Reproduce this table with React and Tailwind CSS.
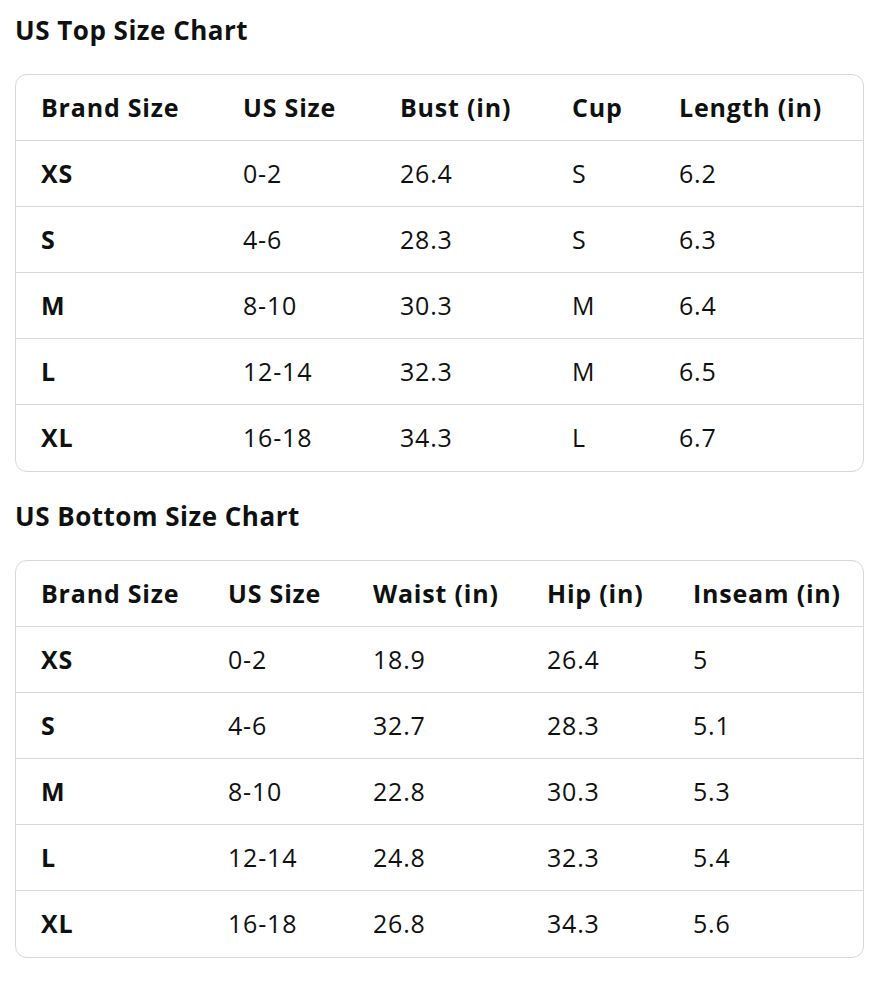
const TOP = {
  title: "US Top Size Chart",
  cols: "grid-cols-[202px_157px_172px_107px_1fr]",
  head: ["Brand Size", "US Size", "Bust (in)", "Cup", "Length (in)"],
  rows: [
    ["XS", "0-2", "26.4", "S", "6.2"],
    ["S", "4-6", "28.3", "S", "6.3"],
    ["M", "8-10", "30.3", "M", "6.4"],
    ["L", "12-14", "32.3", "M", "6.5"],
    ["XL", "16-18", "34.3", "L", "6.7"],
  ],
};

const BOTTOM = {
  title: "US Bottom Size Chart",
  cols: "grid-cols-[187px_145px_174px_146px_1fr]",
  head: ["Brand Size", "US Size", "Waist (in)", "Hip (in)", "Inseam (in)"],
  rows: [
    ["XS", "0-2", "18.9", "26.4", "5"],
    ["S", "4-6", "32.7", "28.3", "5.1"],
    ["M", "8-10", "22.8", "30.3", "5.3"],
    ["L", "12-14", "24.8", "32.3", "5.4"],
    ["XL", "16-18", "26.8", "34.3", "5.6"],
  ],
};

function SizeTable({ data }) {
  return (
    <section>
      <h2 className="text-[26px] font-bold leading-[32px] tracking-[0.5px] text-[#0f1111] pt-[14px] pb-[28px]">
        {data.title}
      </h2>
      <div className="border-[1.5px] border-[#d5d9d9] rounded-[12px] overflow-hidden">
        <div className={`grid ${data.cols} h-[66px] items-center border-b-[1.5px] border-[#d5d9d9] font-bold`}>
          {data.head.map((h) => (
            <div key={h} className="pl-[25px] whitespace-nowrap">{h}</div>
          ))}
        </div>
        {data.rows.map((row, i) => (
          <div
            key={row[0]}
            className={`grid ${data.cols} h-[66px] items-center ${
              i < data.rows.length - 1 ? "border-b-[1.5px] border-[#d5d9d9]" : ""
            }`}
          >
            {row.map((cell, j) => (
              <div key={j} className={`pl-[25px] whitespace-nowrap ${j === 0 ? "font-bold" : ""}`}>
                {cell}
              </div>
            ))}
          </div>
        ))}
      </div>
    </section>
  );
}

export default function App() {
  return (
    <div
      className="w-[882px] min-h-[1003px] bg-white text-[#0f1111] text-[25px] tracking-[0.8px] px-[15px] pr-[18px]"
      style={{ fontFamily: '"Open Sans", "Noto Sans", sans-serif' }}
    >
      <SizeTable data={TOP} />
      <div className="h-[14px]" />
      <SizeTable data={BOTTOM} />
    </div>
  );
}
